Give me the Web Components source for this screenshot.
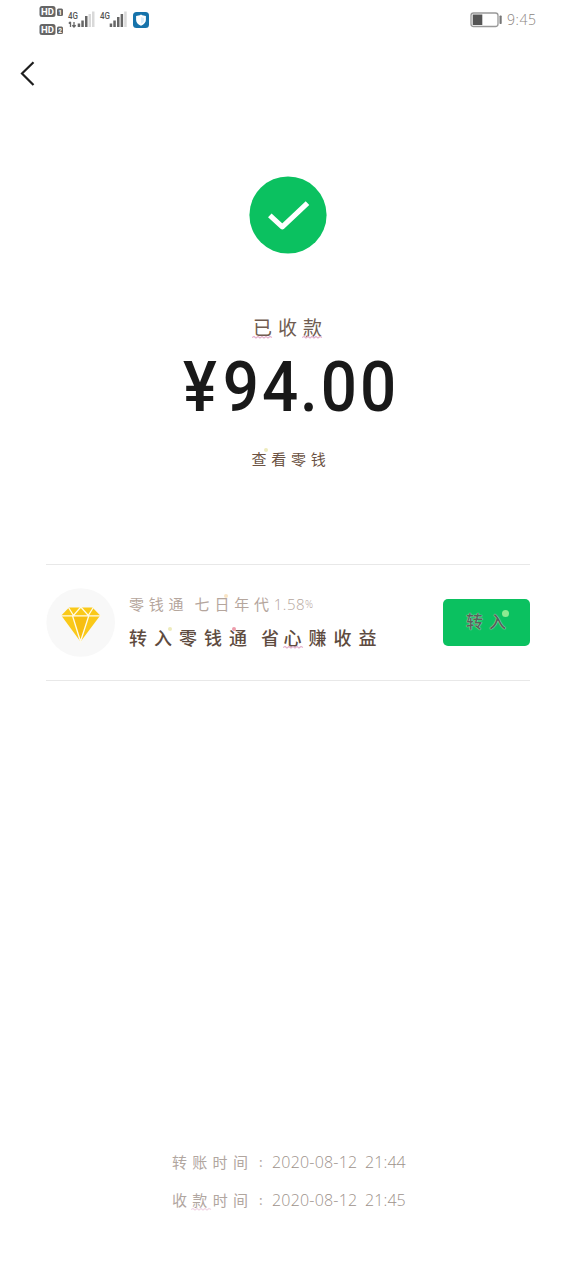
<!DOCTYPE html>
<html lang="zh-CN">
<head>
<meta charset="utf-8">
<title>已收款</title>
<style>
html,body{margin:0;background:#fff}
body{width:576px;height:1280px;overflow:hidden;font-family:"Noto Sans CJK SC",sans-serif}
</style>
</head>
<body>
<receipt-page></receipt-page>
<script>
const define = (name, html) => {
  const t = document.createElement('template');
  t.innerHTML = html;
  customElements.define(name, class extends HTMLElement {
    constructor() {
      super();
      this.attachShadow({mode: 'open'}).append(t.content.cloneNode(true));
    }
  });
};

/* A run of spaced lettering */
define('ink-text', `<style>
:host{display:inline-block;position:relative;white-space:pre;font-size:var(--s,15px);letter-spacing:var(--g,4px);line-height:24px;height:24px}
</style><slot></slot>`);

/* One character with a wavy mark below it */
define('wavy-mark', `<style>
:host{display:inline-block;position:relative}
svg{position:absolute;left:-1px;bottom:var(--b,0px);width:21px;height:4px;opacity:var(--o,1)}
</style><slot></slot><svg viewBox="0 0 21 4"><path d="M0 2.5l2-1 2 1.5 2-1.5 2 1.5 2-1.5 2 1.5 2-1.5 2 1.5 2-1.5 2 1" fill="none" stroke="#e3b0cc" stroke-width="1.1"/></svg>`);

/* Small coloured dot over a character */
define('spark-dot', `<style>
:host{display:inline-block;position:relative}
i{position:absolute;width:var(--d,4px);height:var(--d,4px);border-radius:50%;left:var(--x,10px);top:var(--y,2px);background:var(--c,#eeebbc)}
</style><slot></slot><i></i>`);

define('status-bar', `<style>
:host{display:flex;justify-content:space-between;height:40px;padding:0 39px 0 39px}
svg{display:block}
.r{display:flex;height:40px}
.t{font:300 14px/39px "Open Sans",sans-serif;color:#8b8581;letter-spacing:.6px;margin-left:5px;width:30px;white-space:nowrap}
text{font-family:Roboto,sans-serif}
</style>
<svg width="112" height="40" viewBox="39 0 112 40">
<g fill="#666"><rect x="39.5" y="6" width="16" height="11" rx="2.5"/><rect x="39.5" y="24" width="16" height="11" rx="2.5"/><rect x="57" y="8.5" width="6" height="7.5" rx="1.5"/><rect x="57" y="26.500" width="6" height="7.500" rx="1.5"/></g>
<g fill="#fff" font-weight="700"><text x="41" y="15" font-size="9.500" textLength="13">HD</text><text x="41" y="33" font-size="9.500" textLength="13">HD</text><text x="58.300" y="14.700" font-size="6.500">1</text><text x="58.300" y="32.700" font-size="6.500">2</text></g>
<g fill="#555" font-weight="500" font-size="9.500"><text x="68" y="18.500" textLength="10" lengthAdjust="spacingAndGlyphs">4G</text><text x="100" y="18.500" textLength="10" lengthAdjust="spacingAndGlyphs">4G</text></g>
<path d="M70.500 27v-5M68.800 23.500l1.700-1.800M74 22v5M72.300 25.200l1.700 1.800 1.700-1.800" fill="none" stroke="#666" stroke-width="1.300"/>
<g fill="#666"><rect x="77.700" y="23.500" width="2.500" height="3.500"/><rect x="81.300" y="20.500" width="2.500" height="6.500"/><rect x="85" y="16" width="2.500" height="11"/><rect x="109.700" y="23.500" width="2.500" height="3.500"/><rect x="113.300" y="20.500" width="2.500" height="6.500"/><rect x="117" y="17" width="2.500" height="10"/><rect x="120.600" y="14" width="2.500" height="13"/></g>
<g fill="#d9d9d9"><rect x="88.500" y="14" width="2.500" height="13"/><rect x="92" y="11.500" width="2.500" height="15.500"/><rect x="124.200" y="11.500" width="2.500" height="15.500"/></g>
<rect x="133" y="12" width="16" height="16" rx="3.500" fill="#1673ab"/><path d="M141 14.500c1.700 1 3.200 1.300 4.900 1.400v4.200c0 2.700-2 4.400-4.900 5.700-2.900-1.300-4.900-3-4.900-5.700v-4.200c1.700-.1 3.200-.4 4.900-1.400z" fill="#fff"/><path d="M141 17l3 1v2c0 2-1 2.800-3 3.800z" fill="#d9eefb"/>
</svg>
<div class="r"><svg width="32" height="40" viewBox="470 0 32 40"><rect x="471" y="13" width="27" height="13.500" rx="2.500" fill="#fff" stroke="#999" stroke-width="1.300"/><rect x="472.700" y="14.500" width="9.600" height="10.500" fill="#555"/><rect x="499.500" y="15.500" width="2.200" height="8.500" rx=".8" fill="#777"/></svg><span class="t">9:45</span></div>`);

define('nav-bar', `<style>:host{display:block;height:80px;padding:20px 0 0 20px;box-sizing:border-box}svg{display:block}</style>
<svg width="16" height="28" viewBox="0 0 16 28"><path d="M13.500 2.200L2 13.500 13.500 25" fill="none" stroke="#1e1e1e" stroke-width="2.200"/></svg>`);

define('success-mark', `<style>:host{display:block;width:78px;height:78px}svg{display:block}</style>
<svg width="78" height="78" viewBox="0 0 78 78"><circle cx="39" cy="39" r="38.600" fill="#0bc160"/><path d="M20.800 39.300L33.300 50.800 58.500 27.200" fill="none" stroke="#fff" stroke-width="5.200" stroke-linejoin="round"/></svg>`);

define('money-amount', `<style>:host{display:block;font:500 70px/76px Roboto,sans-serif;color:#191919;white-space:nowrap;width:210px;height:76px;letter-spacing:3.400px}
div{transform:scaleX(.91);transform-origin:0 0;width:240px}</style><div><slot></slot></div>`);

define('gem-badge', `<style>:host{display:block;width:70px;height:70px;flex:none}svg{display:block}</style>
<svg width="70" height="70" viewBox="46 587.500 70 70"><circle cx="80.700" cy="622" r="34.300" fill="#f8f8f8"/>
<path d="M69 607h23.500l7.700 8-19.700 26.300L61.300 615z" fill="#fac919"/><path d="M72.500 616h16.300l-8.300 25z" fill="#f7be10"/>
<path d="M60.500 615.300h40.500M68.500 607l5 8 7.300-8.500 7.500 8.500 5-8M72.500 615.300l8 25.700 8.300-25.700" fill="none" stroke="#fffbe9" stroke-width="1.300"/></svg>`);

define('green-button', `<style>:host{display:flex;align-items:center;justify-content:center;width:87px;height:47px;border-radius:5px;background:#0bc160;color:#56635a;font-weight:500;text-shadow:0 0 1px #b5e3c4,0 0 1px #b5e3c4;box-sizing:border-box;padding:0 0 3px 5px}</style><slot></slot>`);

define('offer-row', `<style>
:host{display:flex;align-items:center;height:117px;box-sizing:border-box;margin:0 46px;border-top:1px solid #e8e8e8;border-bottom:1px solid #e8e8e8}
.c{display:flex;flex-direction:column;flex:1;margin-left:13px;gap:9px;margin-top:-5px}
</style><slot name="icon"></slot><div class="c"><slot></slot></div><slot name="action"></slot>`);

define('time-line', `<style>
:host{display:grid;grid-template-columns:87px 13px 93px 42px;width:235px;height:37.500px;line-height:38px;color:#b1a69f;font-size:15px;white-space:nowrap}
.k{letter-spacing:5.300px}
.q{font-size:13px}
.d{font:300 16px/38px "Open Sans",sans-serif;color:#9d928b}
</style><span class="k"><slot></slot></span><span class="q">:</span><span class="d" style="letter-spacing:.2px"><slot name="date"></slot></span><span class="d" style="letter-spacing:.1px"><slot name="time"></slot></span>`);

define('receipt-page', `<style>
:host{display:flex;flex-direction:column;width:576px;height:1280px;background:#fff}
main{display:flex;flex-direction:column;align-items:center;height:444px;padding-top:56px;box-sizing:border-box}
footer{margin-top:462px;padding-left:172px}
.pct{font-size:10px;vertical-align:2px}
</style>
<status-bar></status-bar><nav-bar></nav-bar>
<main>
<success-mark></success-mark>
<ink-text style="--s:19px;--g:6px;margin:61px 0 0 5px;color:#705c50"><wavy-mark>已</wavy-mark>收<wavy-mark>款</wavy-mark></ink-text>
<money-amount style="margin-top:10px">¥<span style="margin-left:3px">9</span>4<span style="margin:0 0 0 -1.500px">.</span>00</money-amount>
<ink-text style="--s:15px;--g:4.700px;margin:22px 0 0 6px;color:#6b5243"><spark-dot style="--x:12px;--y:1px">查</spark-dot>看零钱</ink-text>
</main>
<offer-row>
<gem-badge slot="icon"></gem-badge>
<ink-text style="--s:15px;--g:4.800px;color:#b5a69d;word-spacing:-2px">零钱通 七<spark-dot style="--c:#f9e4c5">日</spark-dot>年代<span style="font:300 15px 'Open Sans';letter-spacing:.5px">1.58<span class="pct">%</span></span></ink-text>
<ink-text style="--s:18px;--g:7px;color:#5e4b40;font-weight:500;word-spacing:-4px">转<spark-dot style="--x:14px">入</spark-dot>零钱<spark-dot style="--x:3px;--c:#ed9dac">通</spark-dot> <span style="letter-spacing:4.500px">省</span><wavy-mark>心</wavy-mark>赚收益</ink-text>
<green-button slot="action"><ink-text style="--s:17px;--g:6px">转<spark-dot style="--d:7px;--x:13px;--y:1px;--c:#8dea91">入</spark-dot></ink-text></green-button>
</offer-row>
<footer><time-line>转账时间<span slot="date">2020-08-12</span><span slot="time">21:44</span></time-line>
<time-line>收<wavy-mark style="--o:.5;--b:8px">款</wavy-mark>时间<span slot="date">2020-08-12</span><span slot="time">21:45</span></time-line></footer>`);
</script>
</body>
</html>
